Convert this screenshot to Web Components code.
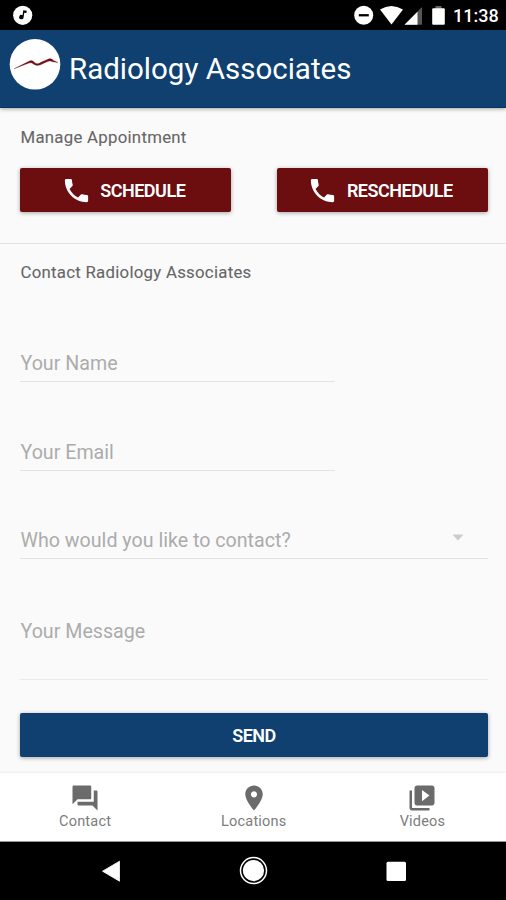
<!DOCTYPE html>
<html lang="en">
<head>
<meta charset="utf-8">
<title>Radiology Associates</title>
<style>
  body { margin: 0; font-family: Roboto, "Noto Sans", sans-serif; background: #fafafa; }
</style>
</head>
<body>
<contact-app></contact-app>
<script>
const define = (name, html) => customElements.define(name, class extends HTMLElement {
  constructor() {
    super();
    const t = document.createElement('template');
    t.innerHTML = html;
    this.attachShadow({ mode: 'open' }).append(t.content.cloneNode(true));
  }
});

define('status-bar', `
<style>
  :host { display: flex; height: 30px; background: #000; color: #fff; align-items: center; justify-content: space-between; padding: 0 9px 0 13px; }
  svg { display: block; }
  .right { display: flex; align-items: center; }
  .time { font-size: 18px; font-weight: 500; line-height: 30px; padding-top: 1px; margin-left: 7px; width: 44px; white-space: nowrap; }
</style>
<svg width="20" height="30" viewBox="0 0 20 30"><circle cx="9.7" cy="15.3" r="9.6" fill="#fff"/><path d="M9.6 10.2h3.5v2.4h-2.2v4.7a2.2 2.2 0 1 1-1.3-2z" fill="#000" transform="rotate(8 10 15)"/></svg>
<div class="right">
  <svg width="92" height="30" viewBox="354 0 92 30">
    <circle cx="363.7" cy="15.3" r="9.5" fill="#fff"/><rect x="358.8" y="14.1" width="10" height="2.3" fill="#000"/>
    <path d="M380 9.5Q391.3 2.4 403 9.5L391.5 24.5Z" fill="#fff"/>
    <path d="M404.500 24.800L422 7V24.800Z" fill="#555"/><path d="M404.500 24.800L417.500 11.800V24.800Z" fill="#fff"/>
    <rect x="435.500" y="6" width="6" height="3" fill="#666"/><rect x="432.200" y="8.300" width="12.600" height="16.500" rx="1" fill="#fff"/>
  </svg>
  <span class="time">11:38</span>
</div>`);

define('app-header', `
<style>
  :host { display: flex; box-sizing: border-box; height: 78px; padding-left: 9px; background: #104070; border-bottom: 1px solid #0a3263; box-shadow: 0 1px 4px rgba(0,0,0,.35); color: #fff; position: relative; }
  svg { display: block; margin-top: 9px; }
  .title { margin: 19px 0 0 8px; font-size: 29.500px; line-height: 40px; white-space: nowrap; letter-spacing: 0; }
</style>
<svg width="52" height="52" viewBox="0 0 52 52"><circle cx="26" cy="25.300" r="25.300" fill="#fff"/><path d="M5 29.800L20 22.300Q22.500 20.500 24.500 22.500Q28 26.500 32 23.300Q38 20.500 41 19.500Q43.500 20 44.500 21.500L49 23.500L43.500 22.800Q41 21 38 22.800L31 26Q27 27.300 24 24.800Q22.500 23 20 24Z" fill="#701015" stroke="#701015" stroke-width=".3"/></svg>
<span class="title"><slot></slot></span>`);

define('section-label', `
<style>:host { display: block; padding-left: .5px; font-size: 16.800px; line-height: 20px; color: #666; letter-spacing: .27px; white-space: nowrap; -webkit-text-stroke: .1px #666; }</style><slot></slot>`);

define('raised-button', `
<style>
  :host { display: flex; box-sizing: border-box; height: 44px; align-items: center; justify-content: center; background: var(--bg, #104070); color: #fff; border-radius: 2px; box-shadow: 0 1px 4px rgba(0,0,0,.35); font-size: 18px; letter-spacing: -.5px; font-weight: 600; line-height: 45px; white-space: nowrap; }
</style><slot name="icon"></slot><slot></slot>`);

define('phone-icon', `
<style>:host { display: block; width: 31px; height: 31px; margin-right: 8.500px; padding-top: 1px; } svg { display: block; }</style>
<svg width="31" height="31" viewBox="0 0 24 24"><path fill="#fff" d="M6.620 10.790c1.440 2.830 3.760 5.140 6.590 6.590l2.200-2.200c.27-.27.67-.36 1.020-.24 1.120.37 2.330.57 3.570.57.55 0 1 .45 1 1V20c0 .55-.45 1-1 1-9.390 0-17-7.610-17-17 0-.55.45-1 1-1h3.500c.55 0 1 .45 1 1 0 1.250.2 2.450.57 3.570.11.35.03.74-.25 1.020l-2.200 2.200z"/></svg>`);

define('text-field', `
<style>
  :host { display: flex; box-sizing: border-box; justify-content: space-between; border-bottom: 1.500px solid #e3e3e3; font-size: 19.650px; line-height: 24px; color: #acacac; white-space: nowrap; }
  span { padding: 1px 0 0 .5px; }
</style><span><slot></slot></span><slot name="caret"></slot>`);

define('caret-icon', `
<style>:host { display: block; margin-right: 24px; } svg { display: block; }</style>
<svg width="12" height="24" viewBox="0 0 12 24"><path d="M.5 6.500h11L6 12.500z" fill="#ccc"/></svg>`);

define('nav-tab', `
<style>
  :host { display: flex; flex: 1; flex-direction: column; align-items: center; padding: 9.500px 0 0 1.500px; font-size: 14.500px; line-height: 18px; color: #7c7c7c; letter-spacing: .2px; }
  ::slotted(svg) { display: block; margin-bottom: 0; }
</style><slot name="icon"></slot><span><slot></slot></span>`);

define('tab-bar', `
<style>:host { display: flex; box-sizing: border-box; height: 69px; background: #fff; border-bottom: 1px solid #999; box-shadow: 0 -1px 3px rgba(0,0,0,.06); }</style><slot></slot>`);

define('system-nav', `
<style>:host { display: block; height: 58px; background: #000; } svg { display: block; }</style>
<svg width="506" height="58" viewBox="0 842 506 58" fill="#fff">
  <path d="M102.500 871.200L119.500 861.200V881.200Z" stroke="#fff" stroke-width=".8" stroke-linejoin="round"/>
  <circle cx="253.500" cy="870.600" r="13" fill="none" stroke="#fff" stroke-width="1.500"/><circle cx="253.500" cy="870.600" r="10.600"/>
  <rect x="386.500" y="861.800" width="19.500" height="19.300" rx="1.500"/>
</svg>`);

define('contact-app', `
<style>
  :host { display: flex; flex-direction: column; width: 506px; height: 900px; overflow: hidden; background: #fafafa; }
  .appt { box-sizing: border-box; height: 136px; padding: 19px 18px 0 20px; border-bottom: 1.500px solid #e2e2e2; }
  .row { display: grid; grid-template-columns: 211px 211px; justify-content: space-between; margin-top: 21px; --bg: #6c0d10; }
  .row raised-button { padding-right: 5px; }
  .form { box-sizing: border-box; height: 529px; display: flex; flex-direction: column; padding: 18px 18px 0 20px; }
  .name { width: 315px; height: 31px; margin-top: 69px; }
  .email { width: 315px; height: 31px; margin-top: 58px; }
  .who { height: 31px; margin-top: 57px; }
  .msg { height: 61px; margin-top: 60px; border-color: #ebebeb; }
  .send { margin-top: 33px; }
</style>
<status-bar></status-bar>
<app-header>Radiology Associates</app-header>
<section class="appt">
  <section-label>Manage Appointment</section-label>
  <div class="row">
    <raised-button><phone-icon slot="icon"></phone-icon>SCHEDULE</raised-button>
    <raised-button><phone-icon slot="icon"></phone-icon>RESCHEDULE</raised-button>
  </div>
</section>
<section class="form">
  <section-label>Contact Radiology Associates</section-label>
  <text-field class="name">Your Name</text-field>
  <text-field class="email">Your Email</text-field>
  <text-field class="who">Who would you like to contact?<caret-icon slot="caret"></caret-icon></text-field>
  <text-field class="msg">Your Message</text-field>
  <raised-button class="send">SEND</raised-button>
</section>
<tab-bar>
  <nav-tab><svg slot="icon" width="30" height="30" viewBox="0 0 24 24" fill="#6b6b6b"><path d="M21 6h-2v9H6v2c0 .55.45 1 1 1h11l4 4V7c0-.55-.45-1-1-1zm-4 6V3c0-.55-.45-1-1-1H3c-.55 0-1 .45-1 1v14l4-4h10c.55 0 1-.45 1-1z"/></svg>Contact</nav-tab>
  <nav-tab><svg slot="icon" width="30" height="30" viewBox="0 0 24 24" fill="#6b6b6b"><path d="M12 2C8.130 2 5 5.130 5 9c0 5.250 7 13 7 13s7-7.750 7-13c0-3.870-3.130-7-7-7zm0 9.500c-1.380 0-2.500-1.120-2.500-2.500s1.120-2.500 2.500-2.500 2.500 1.120 2.500 2.500-1.120 2.500-2.500 2.500z"/></svg>Locations</nav-tab>
  <nav-tab><svg slot="icon" width="30" height="30" viewBox="0 0 24 24" fill="#6b6b6b"><path d="M4 6H2v14c0 1.100.9 2 2 2h14v-2H4V6zm16-4H8c-1.100 0-2 .9-2 2v12c0 1.100.9 2 2 2h12c1.100 0 2-.9 2-2V4c0-1.100-.9-2-2-2zm-8 12.500v-9l6 4.500-6 4.500z"/></svg>Videos</nav-tab>
</tab-bar>
<system-nav></system-nav>`);
</script>
</body>
</html>
